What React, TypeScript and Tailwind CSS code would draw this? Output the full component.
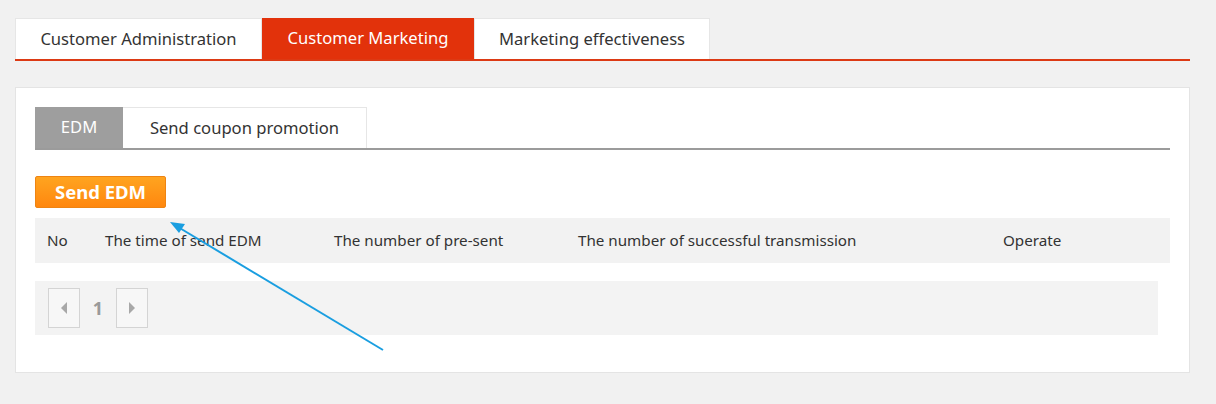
import React from "react";

export default function App() {
  const font = { fontFamily: '"Noto Sans", "Open Sans", Arial, sans-serif' };
  return (
    <div className="relative w-[1216px] h-[404px] bg-[#f1f1f1] pt-[18px] pl-[15px] pr-[26px]" style={font}>
      {/* Top tabs */}
      <div className="flex h-[43px] border-b-[2px] border-[#dc3a14]">
        <div className="w-[247px] h-[41px] bg-white border border-b-0 border-[#e6e6e6] flex items-center justify-center text-[16.6px] text-[#333]">
          Customer Administration
        </div>
        <div className="w-[212px] h-[41px] bg-[#e2320b] flex items-center justify-center text-[16.6px] text-white">
          Customer Marketing
        </div>
        <div className="w-[236px] h-[41px] bg-white border border-b-0 border-[#e6e6e6] flex items-center justify-center text-[16.6px] text-[#333]">
          Marketing effectiveness
        </div>
      </div>

      {/* Panel */}
      <div className="mt-[26px] bg-white border border-[#e4e4e4] pt-[19px] px-[19px] pb-[37px]">
        <div className="flex h-[43px] border-b-[2px] border-[#9b9b9b]">
          <div className="w-[88px] h-[41px] bg-[#9e9e9e] flex items-center justify-center text-[16.6px] text-white">
            EDM
          </div>
          <div className="w-[244px] h-[41px] bg-white border border-b-0 border-l-0 border-[#e6e6e6] flex items-center justify-center text-[16.6px] text-[#333]">
            Send coupon promotion
          </div>
        </div>

        <div className="mt-[26px]">
          <button className="w-[131px] h-[32px] rounded-[2px] border border-[#ee8413] bg-gradient-to-b from-[#ffa41f] to-[#ff870e] text-white font-bold text-[18.5px] flex items-center justify-center">
            Send EDM
          </button>
        </div>

        <div className="mt-[10px] h-[45px] bg-[#f2f2f2] flex items-center text-[15.2px] text-[#333]">
          <div className="pl-[12px] w-[70px]">No</div>
          <div className="w-[229px]">The time of send EDM</div>
          <div className="w-[244px]">The number of pre-sent</div>
          <div className="w-[425px]">The number of successful transmission</div>
          <div>Operate</div>
        </div>

        <div className="mt-[18px] mr-[12px] h-[54px] bg-[#f3f3f3] pl-[13px] flex items-center">
          <div className="w-[32px] h-[40px] border border-[#d4d4d4] bg-[#f7f7f7] flex items-center justify-center">
            <svg width="6" height="12" viewBox="0 0 6 12"><path d="M6 0 L0 6 L6 12 Z" fill="#a8a8a8" /></svg>
          </div>
          <div className="w-[36px] text-center font-bold text-[18px] text-[#999]">1</div>
          <div className="w-[32px] h-[40px] border border-[#d4d4d4] bg-[#f7f7f7] flex items-center justify-center">
            <svg width="6" height="12" viewBox="0 0 6 12"><path d="M0 0 L6 6 L0 12 Z" fill="#a8a8a8" /></svg>
          </div>
        </div>
      </div>

      {/* Annotation arrow */}
      <svg className="absolute left-0 top-0 pointer-events-none" width="1216" height="404">
        <line x1="383" y1="350" x2="178" y2="227" stroke="#1a9ee0" strokeWidth="2" />
        <path d="M170 222 L185 224 L179 233 Z" fill="#1a9ee0" />
      </svg>
    </div>
  );
}
